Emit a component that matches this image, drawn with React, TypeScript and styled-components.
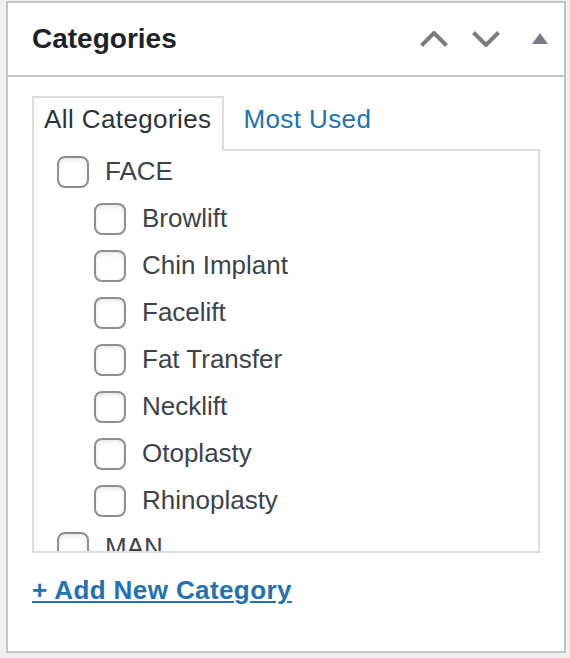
import React from "react";
import styled, { createGlobalStyle } from "styled-components";

const Global = createGlobalStyle`
  html, body { margin: 0; padding: 0; background: #f0f0f1; }
  body { font-family: "Liberation Sans", Arial, sans-serif; }
  * { box-sizing: border-box; }
`;

const Page = styled.div`
  padding: 1px 0 0 6px;
`;

const Box = styled.div`
  width: 560px;
  height: 652px;
  background: #fff;
  border: 2px solid #c3c4c7;
  display: flex;
  flex-direction: column;
`;

const Header = styled.div`
  height: 74px;
  border-bottom: 2px solid #c3c4c7;
  display: flex;
  align-items: center;
  padding-left: 24px;
`;

const Title = styled.h2`
  margin: 0;
  flex: 1;
  font-size: 28px;
  font-weight: 700;
  color: #1d2327;
  line-height: 1;
`;

const HandleButton = styled.button<{ $w: number; $end?: boolean }>`
  width: ${(p) => p.$w}px;
  height: 72px;
  border: 0;
  background: none;
  padding: ${(p) => (p.$end ? "0 16px 0 0" : "0")};
  display: flex;
  align-items: center;
  justify-content: ${(p) => (p.$end ? "flex-end" : "center")};
  color: #787c82;
  cursor: pointer;
`;

const Inside = styled.div`
  padding: 19px 24px 0 24px;
  display: flex;
  flex-direction: column;
`;

const Tabs = styled.ul`
  list-style: none;
  margin: 0;
  padding: 0;
  display: flex;
  gap: 7px;
  position: relative;
  z-index: 1;
`;

const Tab = styled.li<{ $active?: boolean }>`
  border: 2px solid ${(p) => (p.$active ? "#dcdcde" : "transparent")};
  border-bottom: 0;
  background: ${(p) => (p.$active ? "#fff" : "transparent")};
  padding: 4px 11px 14px 10px;
  font-size: 26px;
  line-height: 35px;
  letter-spacing: 0.4px;
  color: ${(p) => (p.$active ? "#2c3338" : "#2271b1")};
  white-space: nowrap;
`;

const Panel = styled.div`
  margin-top: -2px;
  width: 508px;
  height: 404px;
  border: 2px solid #dcdcde;
  overflow: hidden;
  padding: 0 23px;
`;

const List = styled.ul<{ $child?: boolean }>`
  list-style: none;
  margin: ${(p) => (p.$child ? "0" : "-3px 0 0 0")};
  padding: 0 0 0 ${(p) => (p.$child ? 37 : 0)}px;
`;

const Row = styled.label`
  height: 47px;
  display: flex;
  align-items: center;
  gap: 16px;
  font-size: 26px;
  color: #3c434a;
  white-space: nowrap;
`;

const Check = styled.span`
  width: 32px;
  height: 32px;
  flex: none;
  border: 2px solid #8c8f94;
  border-radius: 8px;
  background: #fff;
  box-shadow: inset 0 2px 4px rgba(0, 0, 0, 0.1);
`;

const AddLink = styled.a`
  margin-top: 17px;
  align-self: flex-start;
  font-size: 26px;
  font-weight: 700;
  line-height: 40px;
  letter-spacing: 0.4px;
  color: #2271b1;
  text-decoration: underline;
  text-decoration-thickness: 2px;
  text-underline-offset: 2px;
`;

const ChevronUp = () => (
  <svg width="28" height="16" viewBox="0 0 28 16">
    <path d="M1.5 14.5 L14 2 L26.5 14.5" fill="none" stroke="currentColor" strokeWidth="4" />
  </svg>
);

const ChevronDown = () => (
  <svg width="28" height="16" viewBox="0 0 28 16">
    <path d="M1.5 1.5 L14 14 L26.5 1.5" fill="none" stroke="currentColor" strokeWidth="4" />
  </svg>
);

const Triangle = () => (
  <svg width="16" height="12" viewBox="0 0 16 12">
    <path d="M0 11 L8 0 L16 11 Z" fill="currentColor" />
  </svg>
);

const children = [
  "Browlift",
  "Chin Implant",
  "Facelift",
  "Fat Transfer",
  "Necklift",
  "Otoplasty",
  "Rhinoplasty",
];

const Item = ({ label }: { label: string }) => (
  <Row>
    <Check />
    {label}
  </Row>
);

export default function App() {
  return (
    <>
      <Global />
      <Page>
        <Box>
          <Header>
            <Title>Categories</Title>
            <HandleButton $w={52} aria-label="Move up">
              <ChevronUp />
            </HandleButton>
            <HandleButton $w={52} aria-label="Move down">
              <ChevronDown />
            </HandleButton>
            <HandleButton $w={52} $end aria-label="Toggle panel">
              <Triangle />
            </HandleButton>
          </Header>
          <Inside>
            <Tabs>
              <Tab $active>All Categories</Tab>
              <Tab>Most Used</Tab>
            </Tabs>
            <Panel>
              <List>
                <li>
                  <Item label="FACE" />
                  <List $child>
                    {children.map((c) => (
                      <li key={c}>
                        <Item label={c} />
                      </li>
                    ))}
                  </List>
                </li>
                <li>
                  <Item label="MAN" />
                </li>
              </List>
            </Panel>
            <AddLink href="#">+ Add New Category</AddLink>
          </Inside>
        </Box>
      </Page>
    </>
  );
}
